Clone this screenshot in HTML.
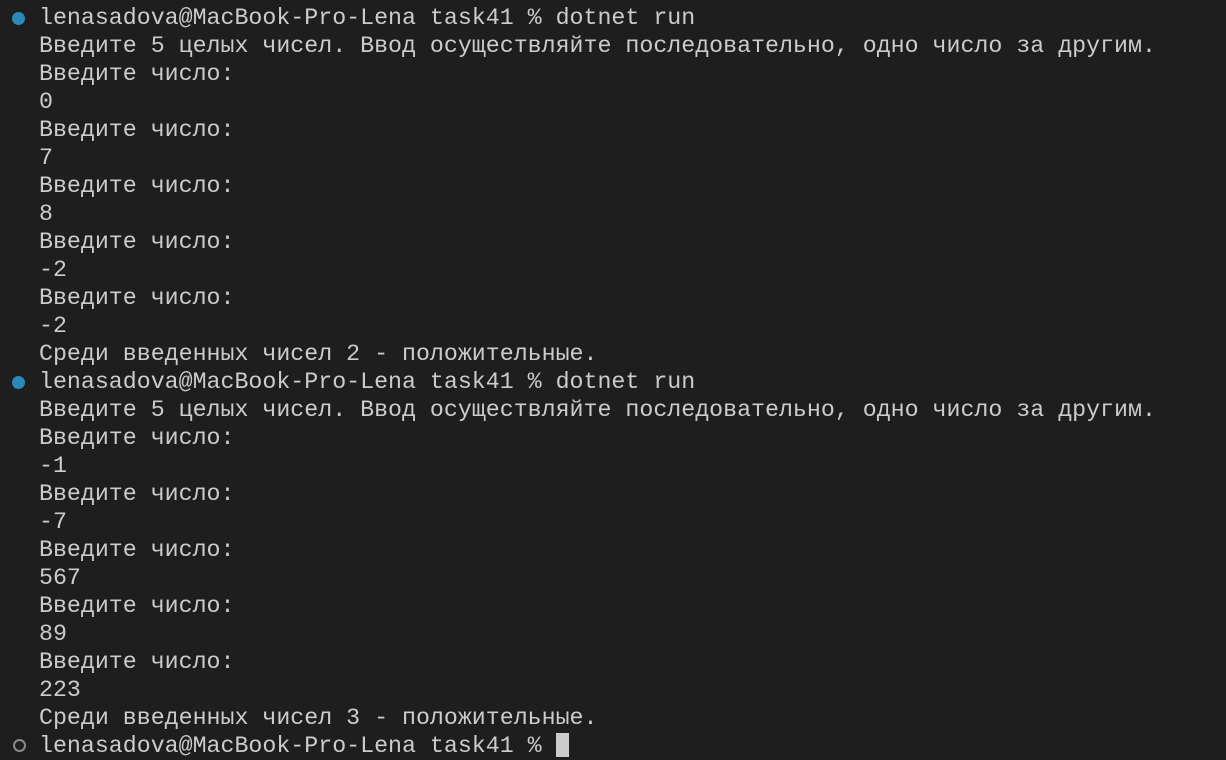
<!DOCTYPE html>
<html><head><meta charset="utf-8"><style>
html,body{margin:0;padding:0;background:#1e1e1e;width:1226px;height:756px;overflow:hidden}
pre{margin:0;position:absolute;left:39px;top:4px;font-family:"Liberation Mono","DejaVu Sans Mono",monospace;font-size:23.27px;line-height:28px;color:#cccccc;white-space:pre}
.dot{position:absolute;left:12px;width:13px;height:13px;border-radius:50%;background:#2a89b8}
.ring{position:absolute;left:13px;width:9px;height:9px;border-radius:50%;border:2px solid #8a8a8a}
.cur{display:inline-block;width:13px;height:24px;background:#cccccc;vertical-align:-5px}
</style></head><body>
<div class="dot" style="top:12px"></div>
<div class="dot" style="top:376px"></div>
<div class="ring" style="top:739px"></div>
<pre>lenasadova@MacBook-Pro-Lena task41 % dotnet run
Введите 5 целых чисел. Ввод осуществляйте последовательно, одно число за другим.
Введите число:
0
Введите число:
7
Введите число:
8
Введите число:
-2
Введите число:
-2
Среди введенных чисел 2 - положительные.
lenasadova@MacBook-Pro-Lena task41 % dotnet run
Введите 5 целых чисел. Ввод осуществляйте последовательно, одно число за другим.
Введите число:
-1
Введите число:
-7
Введите число:
567
Введите число:
89
Введите число:
223
Среди введенных чисел 3 - положительные.
lenasadova@MacBook-Pro-Lena task41 % <span class="cur"></span></pre>
</body></html>
